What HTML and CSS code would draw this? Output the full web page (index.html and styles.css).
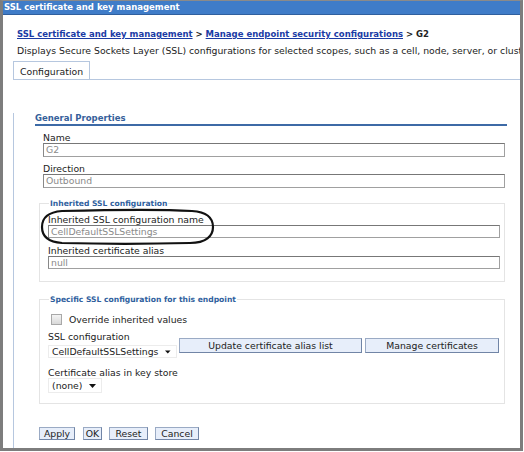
FILE: index.html
```html
<!DOCTYPE html>
<html>
<head>
  <link rel="stylesheet" href="styles.css">
</head>
<body>
  <div class="window">
    <div class="titlebar">SSL certificate and key management</div>

    <div class="page">
      <div class="crumbs">
        <a href="#">SSL certificate and key management</a> &gt;
        <a href="#">Manage endpoint security configurations</a> &gt; G2
      </div>
      <div class="desc">Displays Secure Sockets Layer (SSL) configurations for selected scopes, such as a cell, node, server, or cluster.</div>

      <div class="tabs">
        <div class="tab">Configuration</div>
      </div>

      <div class="panel">
        <div class="heading">General Properties</div>

        <div class="field">
          <div class="label">Name</div>
          <div class="input">G2</div>
        </div>
        <div class="field">
          <div class="label">Direction</div>
          <div class="input">Outbound</div>
        </div>

        <fieldset class="group inherited">
          <legend>Inherited SSL configuration</legend>
          <div class="label first">Inherited SSL configuration name</div>
          <div class="input small">CellDefaultSSLSettings</div>
          <div class="label gap">Inherited certificate alias</div>
          <div class="input small">null</div>

          <!-- hand drawn mark around the config name -->
          <svg class="mark" width="176" height="38" viewBox="0 0 176 38">
            <path d="M22 3 C60 2 120 1 152 3 C168 4 173 11 173 19 C173 28 166 35 150 35 C110 36 60 36 22 35 C8 34 2 28 2 19 C2 9 9 4 22 3 Z" fill="none" stroke="#111" stroke-width="2.2"/>
          </svg>
        </fieldset>

        <fieldset class="group specific">
          <legend>Specific SSL configuration for this endpoint</legend>
          <div class="check">
            <span class="box"></span>
            Override inherited values
          </div>

          <div class="sslrow">
            <div class="sslcol">
              <div class="label">SSL configuration</div>
              <div class="select wide">CellDefaultSSLSettings
                <svg width="7" height="4" viewBox="0 0 7 4"><path d="M0 0 H7 L3.5 4 Z" fill="#111"/></svg>
              </div>
            </div>
            <button class="btn update">Update certificate alias list</button>
            <button class="btn manage">Manage certificates</button>
          </div>

          <div class="label gap2">Certificate alias in key store</div>
          <div class="select">(none)
            <svg width="7" height="4" viewBox="0 0 7 4"><path d="M0 0 H7 L3.5 4 Z" fill="#111"/></svg>
          </div>
        </fieldset>

        <div class="actions">
          <button class="btn apply">Apply</button>
          <button class="btn ok">OK</button>
          <button class="btn reset">Reset</button>
          <button class="btn cancel">Cancel</button>
        </div>
      </div>
    </div>
  </div>
</body>
</html>
```

FILE: styles.css
```css
body {
  margin: 0;
  background: #fff;
  font-family: "DejaVu Sans", Verdana, sans-serif;
  font-size: 9.3px;
  color: #222;
}

.window {
  width: 523px;
  height: 451px;
  box-sizing: border-box;
  border: 3px solid #7d7d7d;
  border-top: 1px solid #8a8a8a;
  overflow: hidden;
  white-space: nowrap;
}

.titlebar {
  height: 13px;
  line-height: 13px;
  background: #3f7cc8;
  border-bottom: 1px solid #2f5f9e;
  color: #fff;
  font-size: 8.5px;
  font-weight: bold;
  padding-left: 1px;
}

.page {
  padding-left: 10px;
}

.crumbs {
  margin: 13px 0 0 4px;
  line-height: 12px;
  font-size: 8.5px;
  font-weight: bold;
  color: #222;
}

.crumbs a {
  color: #1b3ba5;
  text-decoration: underline;
}

.desc {
  margin: 5px 0 0 4px;
  line-height: 12px;
}

.tabs {
  margin-top: 4px;
  height: 18px;
  display: flex;
  border-bottom: 1px solid #b6c7df;
}

.tab {
  width: 77px;
  height: 18px;
  box-sizing: border-box;
  border: 1px solid #b6c7df;
  border-bottom: none;
  background: #fff;
  padding: 4px 0 0 6px;
  margin-bottom: -1px;
  line-height: 12px;
}

.panel {
  border-left: 1px solid #b6c7df;
  padding: 0 13px 0 21px;
  height: 370px;
}

.heading {
  margin-top: 33px;
  line-height: 11px;
  font-size: 8.5px;
  font-weight: bold;
  color: #35609a;
  border-bottom: 2px solid #3d6aa6;
}

.field {
  margin: 7px 2px 0 8px;
}

.label {
  line-height: 10px;
  color: #222;
}

.input {
  height: 14px;
  box-sizing: border-box;
  border: 1px solid #a0a0a0;
  border-top-color: #777;
  border-left-color: #888;
  padding-left: 2px;
  line-height: 12px;
  color: #8a8a8a;
  background: #fff;
}

.input.small {
  height: 13px;
  line-height: 11px;
}

.group {
  position: relative;
  margin: 10px 2px 0 4px;
  padding: 0 4px 12px 8px;
  border: 1px solid #e4e4e4;
}

.group legend {
  padding: 0 1px;
  margin-left: 1px;
  line-height: 11px;
  font-size: 7.6px;
  font-weight: bold;
  color: #2f5f9e;
}

.label.first {
  margin-top: 6px;
}

.gap {
  margin-top: 8px;
}

.mark {
  position: absolute;
  left: 0;
  top: -1px;
}

.specific {
  margin-top: 12px;
  padding-bottom: 10px;
}

.check {
  display: flex;
  align-items: center;
  margin-top: 8px;
  height: 12px;
  padding-left: 3px;
}

.box {
  width: 9px;
  height: 9px;
  border: 1px solid #a8a8a8;
  background: linear-gradient(#f4f4f4, #d8d8d8);
  margin-right: 7px;
}

.sslrow {
  display: flex;
  align-items: center;
  margin-top: 7px;
}

.sslcol {
  width: 131px;
}

.select {
  display: inline-flex;
  align-items: center;
  gap: 7px;
  height: 13px;
  padding: 0 5px 0 3px;
  border: 1px solid #ececec;
  line-height: 11px;
  color: #222;
}

.select.wide {
  width: 129px;
  box-sizing: border-box;
  margin-top: 3px;
}

.gap2 {
  margin-top: 10px;
}

.btn {
  font-family: "DejaVu Sans", Verdana, sans-serif;
  font-size: 9.3px;
  color: #222;
  height: 13px;
  padding: 0;
  line-height: 11px;
  background: #e7eefa;
  border: 1px solid #9aaac4;
  border-right-color: #7185a6;
  border-bottom-color: #7185a6;
  border-radius: 0;
}

.btn.update {
  width: 183px;
  height: 15px;
}

.btn.manage {
  width: 134px;
  height: 15px;
  margin-left: 3px;
}

.actions {
  display: flex;
  gap: 7px;
  margin: 23px 0 0 4px;
}

.btn.apply { width: 36px; }
.btn.ok { width: 19px; margin-left: 1px; }
.btn.reset { width: 39px; }
.btn.cancel { width: 44px; }
```
